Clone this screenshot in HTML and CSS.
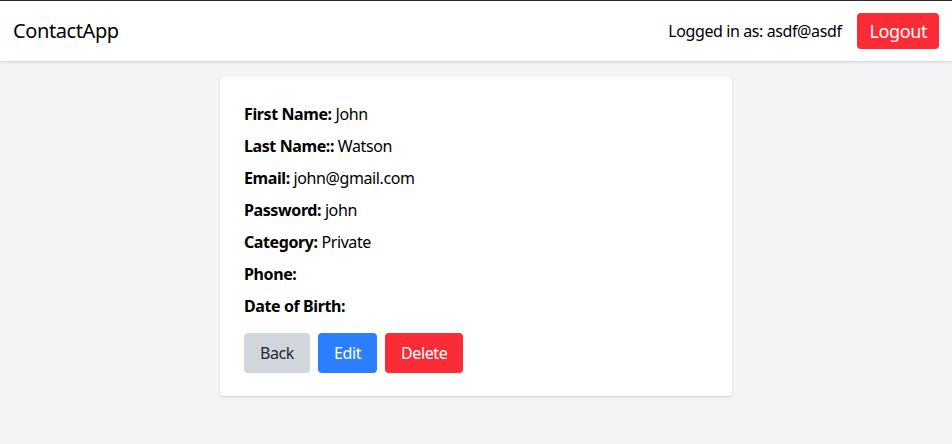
FILE: index.html
```html
<!DOCTYPE html>
<html lang="en">
<head>
<meta charset="utf-8">
<title>ContactApp</title>
<link rel="stylesheet" href="styles.css">
</head>
<body>
<nav class="navbar">
  <div class="brand">ContactApp</div>
  <div class="user">
    <span class="user-label">Logged in as: asdf@asdf</span>
    <button class="btn btn-logout">Logout</button>
  </div>
</nav>
<main class="main">
  <section class="card">
    <p class="row"><strong>First Name:</strong> John</p>
    <p class="row"><strong>Last Name::</strong> Watson</p>
    <p class="row"><strong>Email:</strong> john@gmail.com</p>
    <p class="row"><strong>Password:</strong> john</p>
    <p class="row"><strong>Category:</strong> Private</p>
    <p class="row"><strong>Phone:</strong> </p>
    <p class="row"><strong>Date of Birth:</strong> </p>
    <div class="actions">
      <button class="btn btn-gray">Back</button>
      <button class="btn btn-blue">Edit</button>
      <button class="btn btn-red">Delete</button>
    </div>
  </section>
</main>
</body>
</html>
```
FILE: styles.css
```css
* { box-sizing: border-box; }
html, body { margin: 0; padding: 0; }
body {
  font-family: "Noto Sans", "Open Sans", sans-serif;
  font-size: 16px;
  line-height: 24px;
  letter-spacing: -0.4px;
  color: #000;
  background: #f3f4f6;
  border-top: 1px solid #2a2a2a;
  min-height: 444px;
}
.navbar {
  background: #fff;
  display: flex;
  justify-content: space-between;
  align-items: center;
  padding: 12px 13px;
  box-shadow: 0 1px 3px rgba(0,0,0,0.1), 0 1px 2px rgba(0,0,0,0.06);
}
.brand { font-size: 20px; line-height: 28px; }
.user { display: flex; align-items: center; gap: 16px; }
.btn {
  font-family: inherit;
  letter-spacing: inherit;
  border: none;
  border-radius: 4px;
  cursor: pointer;
  font-size: 16px;
  line-height: 24px;
  padding: 8px 16px;
}
.btn-logout {
  background: #fb2c36;
  color: #fff;
  font-size: 18px;
  line-height: 28px;
  padding: 4px 12px;
}
.main { display: flex; justify-content: center; padding-top: 16px; }
.card {
  width: 512px;
  background: #fff;
  border-radius: 4px;
  padding: 25px 24px 23px;
  box-shadow: 0 1px 3px rgba(0,0,0,0.1), 0 1px 2px rgba(0,0,0,0.06);
}
.row { margin: 0 0 8px; }
.row strong { font-weight: 700; }
.actions { display: flex; gap: 8px; margin-top: 15px; }
.btn-gray { background: #d1d5dc; color: #1e2939; }
.btn-blue { background: #2b7fff; color: #fff; }
.btn-red { background: #fb2c36; color: #fff; }
```
